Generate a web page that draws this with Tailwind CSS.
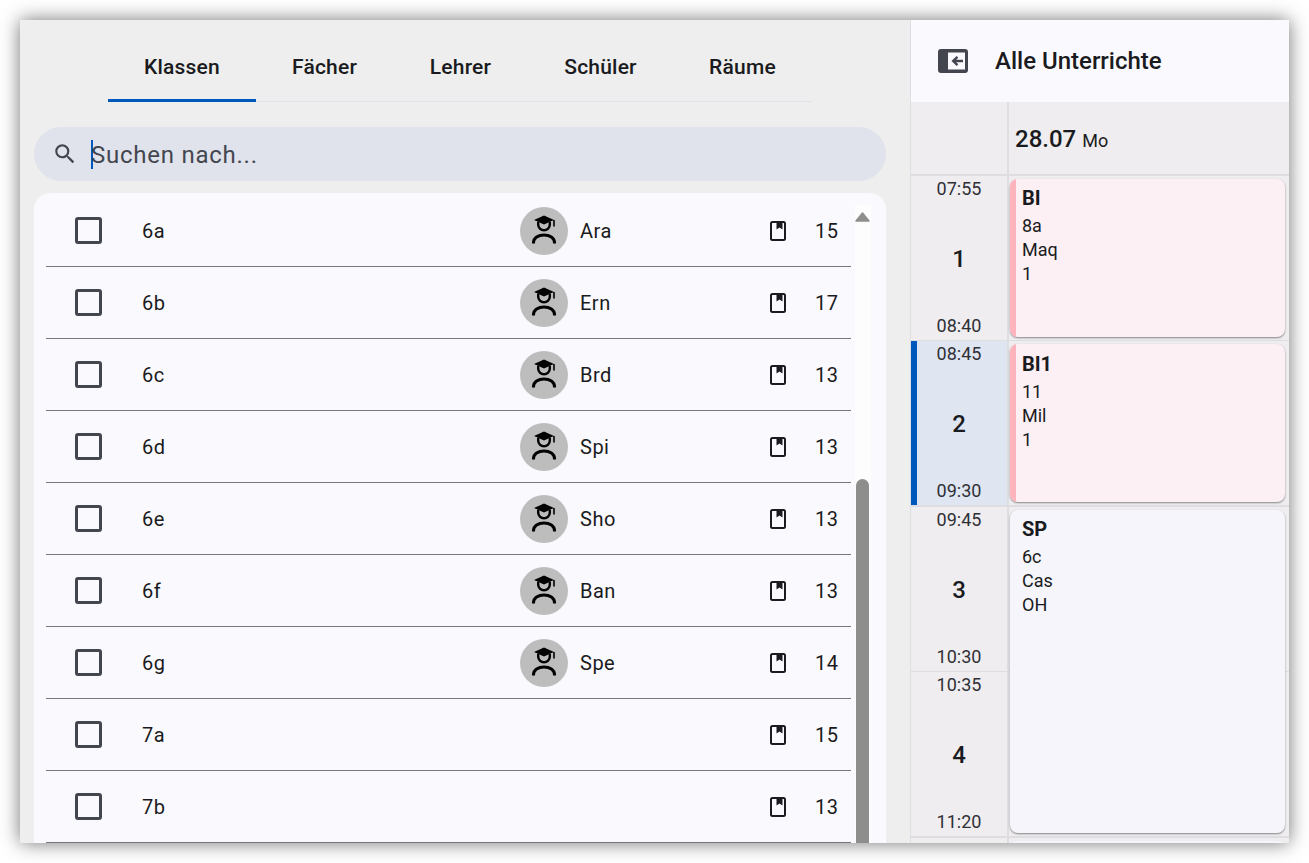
<!DOCTYPE html>
<html lang="de">
<head>
  <meta charset="UTF-8">
  <meta name="viewport" content="width=device-width, initial-scale=1.0">
  <title>Alle Unterrichte</title>
  <script src="https://cdn.jsdelivr.net/npm/@tailwindcss/browser@4"></script>
</head>
<body class="bg-white h-[863px] overflow-hidden p-5 pb-0 font-['Roboto',sans-serif] text-[#1a1b20]">
  <div class="flex h-[823px] w-[1269px] overflow-hidden shadow-[0_0_18px_rgba(0,0,0,0.55)]">

    <!-- left panel -->
    <div class="flex w-[890px] shrink-0 flex-col bg-[#eeeeee]">
      <div class="flex h-[82px] shrink-0 pl-[88px]">
        <div class="flex border-b border-[#e0e2ec]">
          <div class="-mb-px flex w-[148px] items-center justify-center border-b-3 border-[#0058bc] pt-[16px] text-[21px] font-medium tracking-[0.2px]">Klassen</div>
          <div class="flex w-[137px] items-center justify-center pt-[14px] text-[21px] font-medium tracking-[0.2px]">Fächer</div>
          <div class="flex w-[135px] items-center justify-center pt-[14px] text-[21px] font-medium tracking-[0.2px]">Lehrer</div>
          <div class="flex w-[145px] items-center justify-center pt-[14px] text-[21px] font-medium tracking-[0.2px]">Schüler</div>
          <div class="flex w-[139px] items-center justify-center pt-[14px] text-[21px] font-medium tracking-[0.2px]">Räume</div>
        </div>
      </div>

      <div class="mx-[14px] mt-[25px] flex h-[54px] w-[852px] shrink-0 items-center rounded-full bg-[#e0e3ec] pl-[18px]">
        <svg class="h-[26px] w-[26px] text-[#44464f]" viewBox="0 0 24 24" fill="currentColor"><path d="M15.5 14h-.79l-.28-.27A6.47 6.47 0 0 0 16 9.5 6.5 6.5 0 1 0 9.5 16c1.61 0 3.09-.59 4.23-1.57l.27.28v.79l5 4.99L20.49 19l-4.99-5zm-6 0C7.01 14 5 11.99 5 9.5S7.01 5 9.5 5 14 7.01 14 9.5 11.99 14 9.5 14z"/></svg>
        <div class="ml-[13px] h-[29px] w-[2px] bg-[#0058bc]"></div>
        <span class="-ml-[2px] pt-[2px] text-[24px] tracking-[0.75px] text-[#44464f]">Suchen nach...</span>
      </div>

      <div class="relative mx-[14px] mt-3 min-h-0 w-[852px] flex-1 overflow-hidden rounded-t-[16px] bg-[#faf9fe] pl-3">
        <div id="rows" class="mt-[2px] w-[805px]"></div>
        <!-- scrollbar -->
        <div class="absolute top-3 left-[821px] h-[640px] w-[16px] bg-[#fdfdfe]">
          <svg class="absolute top-[7px] left-0 h-[10px] w-[15px]" viewBox="0 0 15 10"><path d="M7.500 1 1 9h13z" fill="#8e8e8c" stroke="#8e8e8c" stroke-width="1.500" stroke-linejoin="round"/></svg>
          <div class="absolute top-[274px] left-[1px] h-[400px] w-[13px] rounded-full bg-[#8e8e8c]"></div>
        </div>
      </div>
    </div>

    <!-- right panel -->
    <div class="flex min-w-0 flex-1 flex-col border-l border-[#dedde2] bg-[#efedf0]">
      <div class="flex h-[82px] shrink-0 items-center bg-[#faf9fe] pl-[27px]">
        <svg class="h-[24px] w-[30px]" viewBox="0 0 30 24"><rect width="30" height="24" rx="3" fill="#44464f"/><rect x="10" y="3.500" width="17" height="17" fill="#faf9fe"/><path d="M25 12H15.500M19.500 7.800 15.200 12l4.300 4.200" fill="none" stroke="#44464f" stroke-width="2.400"/></svg>
        <span class="ml-[27px] text-[24px] font-medium">Alle Unterrichte</span>
      </div>

      <div class="flex h-[74px] shrink-0 border-b-2 border-[#dedde2]">
        <div class="w-[98px] shrink-0 border-r-2 border-[#dedde2]"></div>
        <div class="flex items-center pl-[6px] pt-[1px]">
          <span class="text-[24px] font-medium">28.07</span>
          <span class="ml-[6px] mt-[3px] text-[18px]">Mo</span>
        </div>
      </div>

      <div class="relative min-h-0 flex-1 overflow-hidden">
        <div id="periods"></div>
        <!-- lesson cards -->
        <div class="absolute top-[3px] left-[99px] flex h-[158px] w-[275px] overflow-hidden rounded-[8px] bg-[#fcf0f4] shadow-[0_1px_2px_rgba(0,0,0,0.45)]">
          <div class="w-[6px] bg-[#ffb3bd]"></div>
          <div class="pl-[6px] pt-[6px] text-[18px] leading-[24px]"><div class="mb-[3px] text-[20px] leading-[26px] font-bold">BI</div><div>8a</div><div>Maq</div><div>1</div></div>
        </div>
        <div class="absolute top-[168px] left-[99px] flex h-[158px] w-[275px] overflow-hidden rounded-[8px] bg-[#fcf0f4] shadow-[0_1px_2px_rgba(0,0,0,0.45)]">
          <div class="w-[6px] bg-[#ffb3bd]"></div>
          <div class="pl-[6px] pt-[7px] text-[18px] leading-[24px]"><div class="mb-[3px] text-[20px] leading-[26px] font-bold">BI1</div><div>11</div><div>Mil</div><div>1</div></div>
        </div>
        <div class="absolute top-[334px] left-[99px] h-[323px] w-[275px] rounded-[8px] bg-[#f6f5fb] pl-[12px] pt-[6px] text-[18px] leading-[24px] shadow-[0_1px_2px_rgba(0,0,0,0.45)]">
          <div class="mb-[3px] text-[20px] leading-[26px] font-bold">SP</div><div>6c</div><div>Cas</div><div>OH</div>
        </div>
        <div class="absolute top-[665px] left-[99px] h-[40px] w-[275px] rounded-[8px] bg-[#f6f5fb]"></div>
      </div>
    </div>
  </div>

  <script>
    const rows = [
      ['6a', 'Ara', 15], ['6b', 'Ern', 17], ['6c', 'Brd', 13], ['6d', 'Spi', 13], ['6e', 'Sho', 13],
      ['6f', 'Ban', 13], ['6g', 'Spe', 14], ['7a', '', 15], ['7b', '', 13]
    ];
    const avatar = `<svg class="h-12 w-12" viewBox="0 0 48 48">
      <circle cx="24" cy="24" r="24" fill="#bdbdbd"/>
      <path d="M24 8.500 14 13 24 17.500 34 13z" fill="#000"/>
      <path d="M34 13v6.500" stroke="#000" stroke-width="1.600" fill="none"/>
      <path d="M18.200 15v2.500a5.800 5.800 0 0 0 11.600 0V15" stroke="#000" stroke-width="2.400" fill="none"/>
      <path d="M13.500 36.500v-1c0-4.400 4.700-7.500 10.500-7.500s10.500 3.100 10.500 7.500v1" stroke="#000" stroke-width="3" fill="none"/>
    </svg>`;
    const book = `<svg class="h-5 w-4" viewBox="0 0 16 20">
      <rect x="1" y="1" width="14" height="18" rx="1.500" fill="none" stroke="#1a1b20" stroke-width="2"/>
      <path d="M6.500 1h6v7.500l-3-2-3 2z" fill="#1a1b20"/>
    </svg>`;
    document.getElementById('rows').innerHTML = rows.map(([name, teacher, count]) => `
      <div class="flex h-[72px] items-center border-b border-[#75777f] text-[20px] tracking-[0.5px]">
        <div class="ml-[29px] h-[27px] w-[27px] shrink-0 rounded-[3px] border-[3px] border-[#44464f]"></div>
        <div class="ml-[40px] w-[378px] shrink-0">${name}</div>
        <div class="flex w-[250px] shrink-0 items-center">
          ${teacher ? avatar + `<span class="ml-3">${teacher}</span>` : ''}
        </div>
        <div class="shrink-0">${book}</div>
        <div class="ml-[29px]">${count}</div>
      </div>`).join('');

    const periods = [
      ['07:55', 1, '08:40', 165, false, 'border-b'],
      ['08:45', 2, '09:30', 166, true, 'border-b-2'],
      ['09:45', 3, '10:30', 165, false, 'border-b'],
      ['10:35', 4, '11:20', 166, false, 'border-b-2'],
      ['', '', '', 40, false, '']
    ];
    document.getElementById('periods').innerHTML = periods.map(([from, no, to, height, active, line]) => `
      <div class="flex border-[#dedde2] ${line}" style="height:${height}px">
        <div class="relative flex w-[98px] shrink-0 flex-col items-center justify-between border-r-2 border-[#dedde2] pt-[1px] pb-[2px] text-[18px] leading-[24px] text-[#2f3036] ${active ? 'bg-[#dfe5f1]' : ''}">
          ${active ? '<div class="absolute inset-y-0 left-0 w-[6px] bg-[#0058bc]"></div>' : ''}
          <span>${from}</span>
          <span class="pt-[2px] text-[24px] font-medium text-[#1a1b20]">${no}</span>
          <span>${to}</span>
        </div>
      </div>`).join('');
  </script>
</body>
</html>
